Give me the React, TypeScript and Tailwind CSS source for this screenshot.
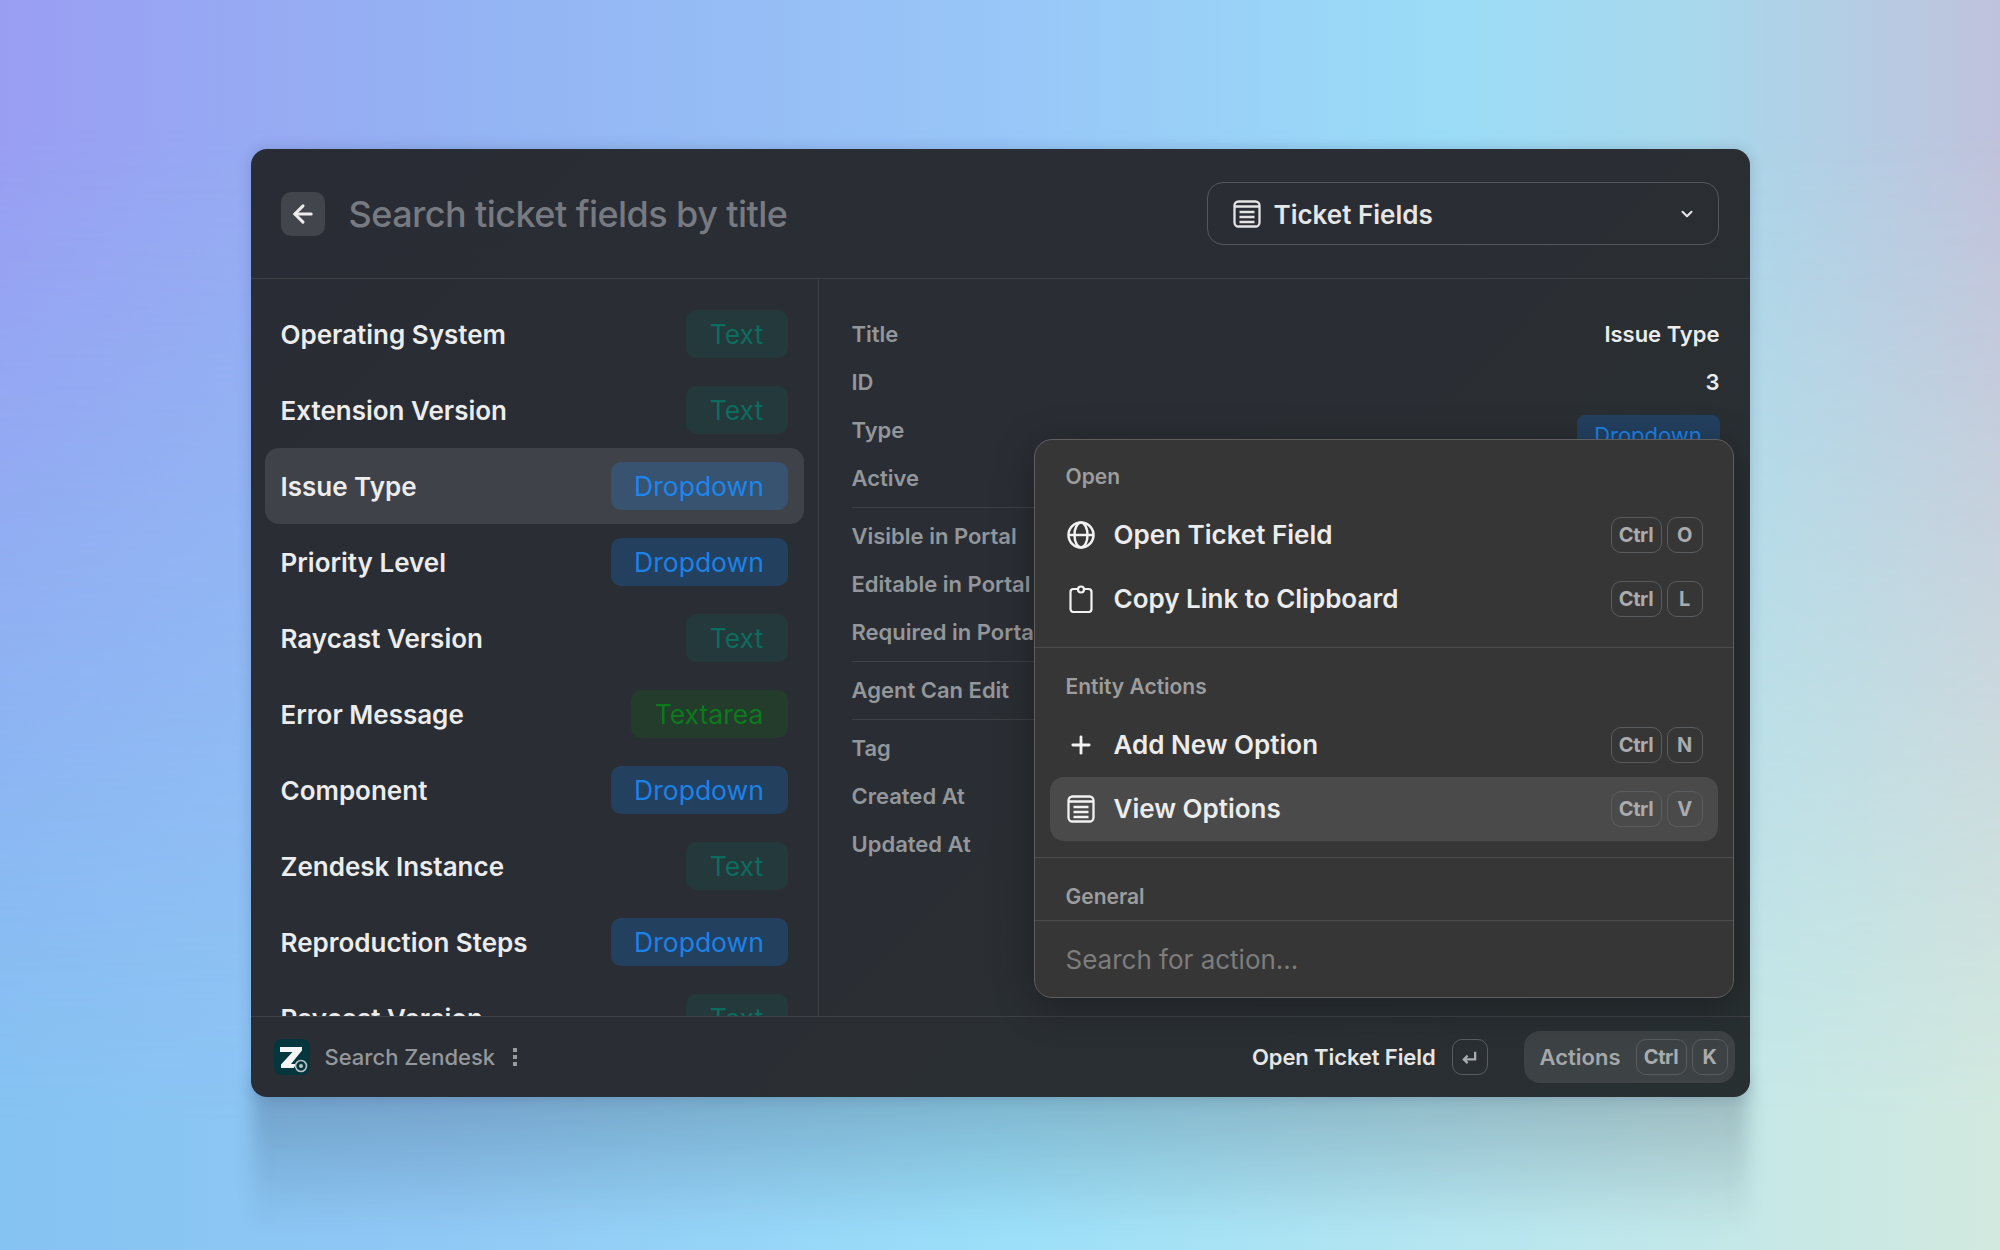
import { ArrowLeft, ChevronDown, Plus } from "lucide-react";

const fields = [
  { name: "Operating System", type: "Text" },
  { name: "Extension Version", type: "Text" },
  { name: "Issue Type", type: "Dropdown", active: true },
  { name: "Priority Level", type: "Dropdown" },
  { name: "Raycast Version", type: "Text" },
  { name: "Error Message", type: "Textarea" },
  { name: "Component", type: "Dropdown" },
  { name: "Zendesk Instance", type: "Text" },
  { name: "Reproduction Steps", type: "Dropdown" },
  { name: "Raycast Version", type: "Text" },
];

function ListIcon({ className }: { className?: string }) {
  return (
    <svg viewBox="0 0 28 28" fill="none" stroke="currentColor" strokeWidth="2.3" className={className}>
      <rect x="1.5" y="1.5" width="25" height="25" rx="4" />
      <path d="M1.5 6.5h25M6.5 12h15M6.5 17h15M6.5 22h15" />
    </svg>
  );
}

function GlobeIcon() {
  return (
    <svg viewBox="0 0 28 28" fill="none" stroke="currentColor" strokeWidth="2.5" className="h-[28px] w-[28px]">
      <circle cx="14" cy="14" r="12.5" />
      <ellipse cx="14" cy="14" rx="6.5" ry="12.5" />
      <path d="M1.5 14h25" />
    </svg>
  );
}

function ClipboardIcon() {
  return (
    <svg viewBox="0 0 28 28" fill="none" stroke="currentColor" strokeWidth="2.2" className="h-[28px] w-[28px]">
      <rect x="3.5" y="4" width="21" height="23" rx="3" />
      <circle cx="14" cy="4.5" r="3" fill="#363636" />
    </svg>
  );
}

function ZendeskLogo() {
  return (
    <div className="flex h-[36px] w-[36px] items-center justify-center rounded-[8px] bg-[#03363d]">
      <svg viewBox="0 0 36 36" className="h-[36px] w-[36px]">
        <path d="M6 8h22v3.5L17 25h6l-3.5 4H7v-3.5L18.5 13H6Z" fill="#f4f6f6" />
        <circle cx="27" cy="27" r="5.5" fill="#03363d" stroke="#b9c2c4" strokeWidth="1.6" />
        <circle cx="27" cy="27" r="2" fill="#b9c2c4" />
      </svg>
    </div>
  );
}

function TypeBadge({ type, active }: { type: string; active?: boolean }) {
  let tone = "w-[102px] bg-[#24393b] text-[#0c6c5f]";
  if (type === "Dropdown") {
    tone = active ? "w-[177px] bg-[#37536f] text-[#1d86ee]" : "w-[177px] bg-[#23405f] text-[#1d82e6]";
  }
  if (type === "Textarea") {
    tone = "w-[157px] bg-[#233c2c] text-[#0c7a1c]";
  }
  return (
    <span className={`flex h-[48px] shrink-0 items-center justify-center rounded-[10px] pt-[1px] text-[26.5px] ${tone}`}>
      {type}
    </span>
  );
}

function Key({ label, wide }: { label: React.ReactNode; wide?: boolean }) {
  return (
    <span
      className={`flex h-[36px] items-center justify-center rounded-[10px] border border-[#5a5d5f] text-[20px] font-bold tracking-[-0.4px] text-[#a9abac] ${
        wide ? "w-[51px]" : "w-[36px]"
      }`}
    >
      {label}
    </span>
  );
}

function Shortcut({ k }: { k: string }) {
  return (
    <span className="flex gap-[5px]">
      <Key label="Ctrl" wide />
      <Key label={k} />
    </span>
  );
}

function ActionRow({
  icon,
  label,
  k,
  active,
}: {
  icon: React.ReactNode;
  label: string;
  k: string;
  active?: boolean;
}) {
  return (
    <div
      className={`flex h-[64px] items-center justify-between rounded-[14px] pl-[17px] pr-[15px] ${
        active ? "bg-[#4a4a4a]" : ""
      }`}
    >
      <div className="flex items-center gap-[19px]">
        <span className="flex w-[28px] items-center justify-center text-[#f2f2f2]">{icon}</span>
        <span className="text-[26px] font-semibold leading-none text-[#ececec]">{label}</span>
      </div>
      <Shortcut k={k} />
    </div>
  );
}

function Detail({ label, value }: { label: string; value?: React.ReactNode }) {
  return (
    <div className="flex h-[48px] items-center justify-between">
      <span className="whitespace-nowrap text-[22px] font-semibold text-[#93979b]">{label}</span>
      {value}
    </div>
  );
}

function Rule() {
  return <div className="mb-[4px] mt-[5px] h-px bg-[#3d4146]" />;
}

function ActionPanel() {
  return (
    <div className="absolute left-[783px] top-[290px] z-10 flex h-[559px] w-[700px] flex-col overflow-hidden rounded-[18px] border border-[#5e5e5e] bg-[#363636] shadow-[0_8px_40px_rgba(0,0,0,0.3)]">
      <div className="flex h-[208px] shrink-0 flex-col border-b border-[#4b4b4b] px-[15px]">
        <div className="flex h-[63px] shrink-0 items-end pb-[11px] pl-[16px] text-[21px] font-semibold text-[#9d9d9d]">
          Open
        </div>
        <ActionRow icon={<GlobeIcon />} label="Open Ticket Field" k="O" />
        <ActionRow icon={<ClipboardIcon />} label="Copy Link to Clipboard" k="L" />
      </div>
      <div className="flex h-[210px] shrink-0 flex-col border-b border-[#4b4b4b] px-[15px]">
        <div className="flex h-[65px] shrink-0 items-end pb-[11px] pl-[16px] text-[21px] font-semibold text-[#9d9d9d]">
          Entity Actions
        </div>
        <ActionRow icon={<Plus className="h-[28px] w-[28px]" strokeWidth={2.4} />} label="Add New Option" k="N" />
        <ActionRow icon={<ListIcon className="h-[28px] w-[28px]" />} label="View Options" k="V" active />
      </div>
      <div className="flex h-[63px] shrink-0 items-center border-b border-[#4b4b4b] pl-[31px] pt-[16px] text-[21px] font-semibold text-[#9d9d9d]">
        General
      </div>
      <div className="flex flex-1 items-center pl-[31px] text-[26px] text-[#7d7d7d]">Search for action...</div>
    </div>
  );
}

export default function App() {
  return (
    <div className="relative flex min-h-screen justify-center overflow-hidden bg-[linear-gradient(to_right,#9a9ef3_0%,#94b5f3_25%,#98c6f8_50%,#9bdcf7_72%,#a8d8ec_85%,#c0c2dc_100%)] pt-[149px] font-['Inter',sans-serif]">
      <div className="absolute inset-0 bg-[linear-gradient(to_right,#85c3f2_0%,#90c8f5_22%,#9bdff9_50%,#b8e6ef_75%,#d2e9df_100%)] [mask-image:linear-gradient(to_bottom,transparent_10%,black_90%)]" />
      <div className="relative h-[948px] w-[1499px]">
        {/* soft shadow falling below the window */}
        <div className="absolute left-[2px] right-[2px] top-[calc(100%-16px)] h-[150px] bg-[linear-gradient(to_bottom,rgba(15,30,50,0.24),rgba(15,30,50,0))] blur-[9px]" />
        <div className="relative flex h-full flex-col overflow-hidden rounded-[16px] bg-[linear-gradient(135deg,#292c34_0%,#2a2e34_50%,#282f31_100%)] shadow-[0_0_14px_rgba(20,40,80,0.18)]">
          <header className="flex h-[130px] shrink-0 items-center justify-between border-b border-[#3d4146] pl-[30px] pr-[31px]">
            <div className="flex items-center gap-[24px]">
              <button className="flex h-[44px] w-[44px] items-center justify-center rounded-[10px] bg-[#42454c] text-[#ececec]">
                <ArrowLeft className="h-[28px] w-[28px]" strokeWidth={2.6} />
              </button>
              <span className="text-[36px] font-medium leading-none tracking-[-0.55px] text-[#777a80]">
                Search ticket fields by title
              </span>
            </div>
            <div className="flex h-[63px] w-[512px] items-center justify-between rounded-[16px] border border-[#54585c] pl-[25px] pr-[22px]">
              <div className="flex items-center gap-[13px]">
                <ListIcon className="h-[28px] w-[28px] text-[#e4e4e4]" />
                <span className="pt-[2px] text-[26px] font-semibold text-[#e6e6e6]">Ticket Fields</span>
              </div>
              <ChevronDown className="h-[18px] w-[18px] text-[#e4e4e4]" strokeWidth={2.8} />
            </div>
          </header>

          <div className="flex min-h-0 flex-1">
            <div className="w-[568px] shrink-0 overflow-hidden border-r border-[#3d4146] px-[14px] pt-[17px]">
              {fields.map((f, i) => (
                <div
                  key={i}
                  className={`flex h-[76px] items-center justify-between rounded-[14px] px-[16px] ${
                    f.active ? "bg-[#3f4249]" : ""
                  }`}
                >
                  <span className="text-[26px] font-semibold text-[#ececec]">{f.name}</span>
                  <TypeBadge type={f.type} active={f.active} />
                </div>
              ))}
            </div>

            <div className="min-w-0 flex-1 overflow-hidden pl-[33px] pr-[30px] pt-[31px]">
              <Detail label="Title" value={<span className="text-[22px] font-semibold text-[#ececec]">Issue Type</span>} />
              <Detail label="ID" value={<span className="text-[22px] font-semibold text-[#ececec]">3</span>} />
              <Detail
                label="Type"
                value={
                  <span className="mt-[10px] flex h-[40px] w-[143px] items-center justify-center rounded-[8px] bg-[#23405f] text-[22px] text-[#1d82e6]">
                    Dropdown
                  </span>
                }
              />
              <Detail label="Active" />
              <Rule />
              <Detail label="Visible in Portal" />
              <Detail label="Editable in Portal" />
              <Detail label="Required in Portal" />
              <Rule />
              <Detail label="Agent Can Edit" />
              <Rule />
              <Detail label="Tag" />
              <Detail label="Created At" />
              <Detail label="Updated At" />
            </div>
          </div>

          <footer className="flex h-[81px] shrink-0 items-center justify-between border-t border-[#3d4146] pl-[23px] pr-[15px]">
            <div className="flex items-center gap-[15px]">
              <ZendeskLogo />
              <span className="text-[22px] font-medium text-[#94979b]">Search Zendesk</span>
              <span className="flex flex-col gap-[3px] pl-[3px]">
                <span className="h-[4px] w-[4px] bg-[#9a9da0]" />
                <span className="h-[4px] w-[4px] bg-[#9a9da0]" />
                <span className="h-[4px] w-[4px] bg-[#9a9da0]" />
              </span>
            </div>
            <div className="flex items-center gap-[36px]">
              <div className="flex items-center gap-[16px]">
                <span className="text-[22px] font-semibold tracking-[-0.1px] text-[#e6e6e6]">Open Ticket Field</span>
                <Key
                  label={
                    <svg viewBox="0 0 18 18" fill="none" stroke="currentColor" strokeWidth="2.4" className="h-[17px] w-[17px]">
                      <path d="M15 3v8H3M7 7l-4 4 4 4" />
                    </svg>
                  }
                />
              </div>
              <div className="flex h-[52px] items-center gap-[5px] rounded-[16px] bg-[#3d4245] pl-[16px] pr-[7px]">
                <span className="mr-[10px] text-[22px] font-semibold text-[#a5a8aa]">Actions</span>
                <Key label="Ctrl" wide />
                <Key label="K" />
              </div>
            </div>
          </footer>

          <ActionPanel />
        </div>
      </div>
    </div>
  );
}
